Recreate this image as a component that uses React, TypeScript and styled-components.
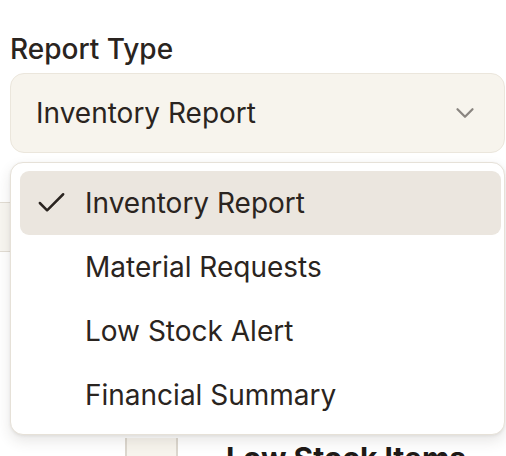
import React from "react";
import styled, { createGlobalStyle } from "styled-components";
import { Check, ChevronDown } from "lucide-react";

const Global = createGlobalStyle`
  html, body { margin: 0; padding: 0; background: #ffffff; overflow: hidden; }
  body { font-family: Inter, "Noto Sans", sans-serif; color: #2a2420; }
`;

const Page = styled.div`
  position: relative;
  padding: 31px 1px 0 10px;
  height: 456px;
  box-sizing: border-box;
  overflow: hidden;
`;

const Field = styled.div`
  position: relative;
  display: flex;
  flex-direction: column;
  gap: 6px;
`;

const Label = styled.div`
  font-size: 28px;
  line-height: 36px;
  font-weight: 500;
  color: #2a2420;
`;

const Trigger = styled.button`
  display: flex;
  align-items: center;
  justify-content: space-between;
  height: 80px;
  box-sizing: border-box;
  padding: 0 24px 0 25px;
  background: #f7f4ed;
  border: 1.5px solid #ebe6dc;
  border-radius: 14px;
  font-family: inherit;
  font-size: 28px;
  color: #2a2420;
  text-align: left;
  cursor: pointer;
  svg { color: #8a8580; }
`;

const TabBar = styled.div`
  margin: 49px 0 0 -10px;
  height: 48px;
  background: #f8f6f1;
  border-top: 1.5px solid #e2ddd4;
  border-bottom: 1.5px solid #e2ddd4;
`;

const Section = styled.div`
  display: flex;
  align-items: flex-start;
  gap: 48px;
  margin: 186px 0 0 115px;
`;

const IconBox = styled.div`
  width: 49px;
  height: 60px;
  background: #f7f4ed;
  border-left: 2px solid #dcd7ce;
  border-right: 2px solid #dcd7ce;
`;

const Heading = styled.h2`
  margin: 0;
  font-size: 30px;
  line-height: 40px;
  font-weight: 700;
  color: #1f1a17;
  white-space: nowrap;
`;

const Menu = styled.div`
  position: absolute;
  top: 131px;
  left: 0;
  right: 0;
  box-sizing: border-box;
  padding: 8px 3px 7px 9px;
  background: #ffffff;
  border: 1.5px solid #e6e1d8;
  border-radius: 13px;
  box-shadow: 0 6px 14px rgba(60, 50, 40, 0.12), 0 1px 3px rgba(60, 50, 40, 0.08);
  display: flex;
  flex-direction: column;
`;

const Item = styled.div<{ $active?: boolean }>`
  display: flex;
  align-items: center;
  height: 64px;
  padding-left: 65px;
  position: relative;
  border-radius: 9px;
  background: ${(p) => (p.$active ? "#ebe6df" : "transparent")};
  font-size: 28px;
  color: #2a2420;
`;

const CheckMark = styled.span`
  position: absolute;
  left: 14px;
  top: 50%;
  transform: translateY(-50%);
  display: flex;
  color: #2a2420;
`;

const options = ["Inventory Report", "Material Requests", "Low Stock Alert", "Financial Summary"];

export default function App() {
  const selected = options[0];
  return (
    <>
      <Global />
      <Page>
        <Field>
          <Label>Report Type</Label>
          <Trigger>
            <span>{selected}</span>
            <ChevronDown size={30} strokeWidth={1.8} />
          </Trigger>
          <Menu>
            {options.map((o) => (
              <Item key={o} $active={o === selected}>
                {o === selected && (
                  <CheckMark>
                    <Check size={35} strokeWidth={1.7} />
                  </CheckMark>
                )}
                {o}
              </Item>
            ))}
          </Menu>
        </Field>
        <TabBar />
        <Section>
          <IconBox />
          <Heading>Low Stock Items</Heading>
        </Section>
      </Page>
    </>
  );
}
